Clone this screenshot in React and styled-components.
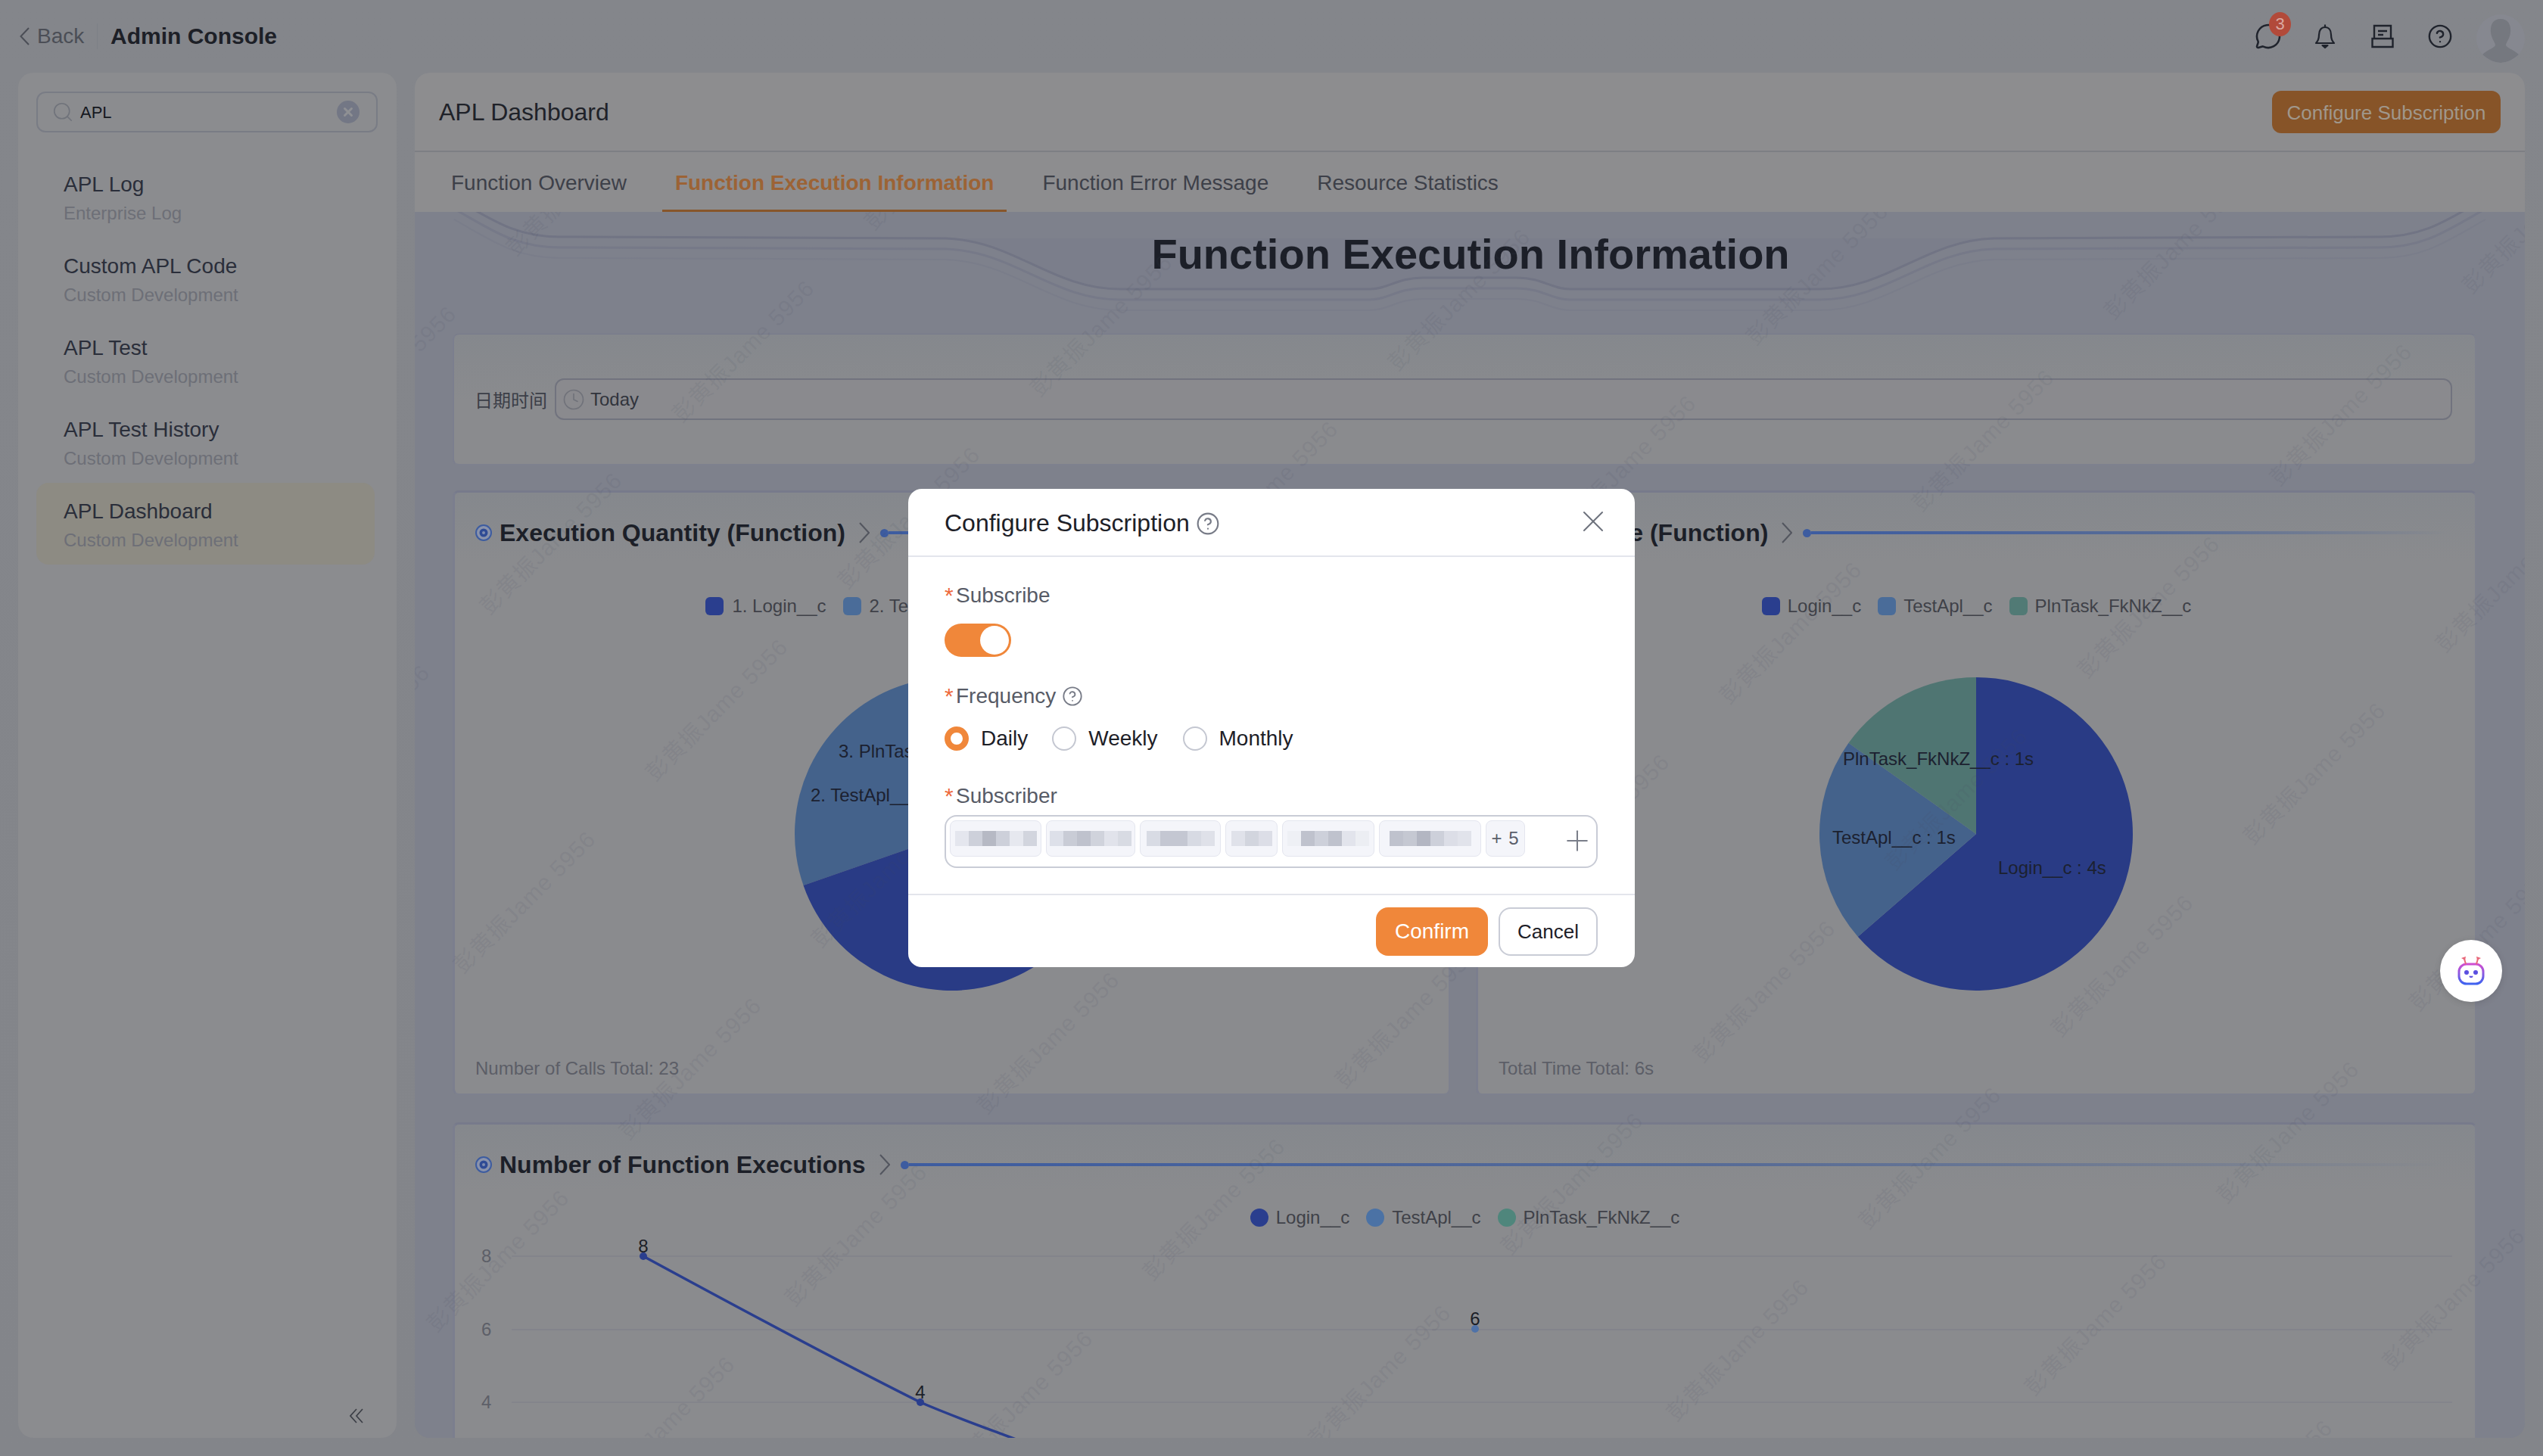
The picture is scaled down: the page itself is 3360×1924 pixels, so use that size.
import React from 'react';
import styled, { createGlobalStyle } from 'styled-components';
import { X, Plus, MessageCircle, CircleHelp, Search, Clock } from 'lucide-react';

const Global = createGlobalStyle`
  html, body { margin: 0; padding: 0; width: 3360px; height: 1924px; overflow: hidden; background: #84868b; }
  * { box-sizing: border-box; }
  body, button { font-family: "Liberation Sans", "Noto Sans CJK SC", Arial, sans-serif; }
`;

const Page = styled.div`
  width: 3360px; height: 1924px; display: flex; flex-direction: column;
  background: linear-gradient(180deg, #84868b 0%, #83858a 100%);
  position: relative; overflow: hidden;
`;
const TopBar = styled.header`
  height: 96px; flex: none; display: flex; align-items: center; padding: 0 24px 0 26px;
`;
const BackLink = styled.div`
  display: flex; align-items: center; gap: 10px; font-size: 28px; color: #4b4e56;
  border-right: 1px solid #7d8087; height: 34px; width: 103px;
`;
const AppName = styled.div`
  margin-left: 17px; font-size: 30px; font-weight: 700; color: #1d2027;
`;
const TopIcons = styled.div`
  margin-left: auto; display: flex; align-items: center; height: 96px;
`;
const IconSlot = styled.div`
  width: 76px; display: flex; justify-content: center; align-items: center; position: relative; color: #1f232c; height: 40px;
`;
const Badge = styled.span`
  position: absolute; left: 40px; top: -12px; width: 29px; height: 32px; border-radius: 50%;
  background: #b24a3a; color: #d9a9a2; font-size: 22px; display: flex; align-items: center; justify-content: center;
`;
const AvatarBox = styled.div`
  width: 64px; height: 64px; margin-left: 10px; margin-top: 6px;
  border-radius: 50%; background: #868890; overflow: hidden;
`;
const Body = styled.div`
  flex: 1; min-height: 0; display: flex; gap: 24px; padding: 0 24px 24px 24px;
`;
const Sidebar = styled.aside`
  width: 500px; flex: none; border-radius: 20px; background: #8b8c8f; padding: 25px 24px 0;
  display: flex; flex-direction: column; position: relative;
`;
const SearchBox = styled.div`
  height: 54px; width: 451px; border: 2px solid #797c85; border-radius: 12px;
  display: flex; align-items: center; padding: 0 22px 0 18px; color: #70737b;
`;
const SearchText = styled.span`
  margin: 2px 0 0 8px; font-size: 22px; color: #15181f; flex: 1;
`;
const ClearDot = styled.span`
  width: 30px; height: 30px; border-radius: 50%; background: #737785; color: #8f9094;
  display: flex; align-items: center; justify-content: center;
`;
const MenuList = styled.div`
  margin-top: 31px; display: flex; flex-direction: column;
`;
const MenuItem = styled.div`
  height: 108px; width: 447px; padding: 20px 36px 0; border-radius: 16px;
  background: ${p => (p.$active ? '#8d8b83' : 'transparent')};
`;
const MenuTitle = styled.div`
  font-size: 28px; line-height: 36px; color: #2a2e3a;
`;
const MenuSub = styled.div`
  font-size: 24px; line-height: 36px; margin-top: 2px; color: #6d6f77;
`;
const Collapse = styled.div`
  position: absolute; right: 44px; bottom: 19px; color: #3c3f47; display: flex;
`;
const Main = styled.main`
  flex: 1; min-width: 0; border-radius: 20px; overflow: hidden; display: flex; flex-direction: column; background: #7e818c;
`;
const MainHead = styled.div`
  height: 105px; flex: none; display: flex; align-items: center; justify-content: space-between;
  padding: 0 32px; background: #8d8d8f; border-bottom: 2px solid #7d7f84;
`;
const MainTitle = styled.h1`
  margin: 2px 0 0; font-size: 32px; font-weight: 400; color: #1f2229;
`;
const SubscribeButton = styled.button`
  width: 302px; height: 56px; border: 0; border-radius: 12px; background: #875428; color: #a0978b; font-size: 26px; padding: 3px 0 0;
`;
const Tabs = styled.nav`
  height: 79px; flex: none; display: flex; gap: 30px; padding-left: 31px; background: #8d8d8f;
`;
const Tab = styled.div`
  padding: 6px 17px 0; display: flex; align-items: center; font-size: 28px; position: relative;
  color: ${p => (p.$active ? '#9c6335' : '#3d4049')};
  font-weight: ${p => (p.$active ? 700 : 400)};
  border-bottom: 4px solid ${p => (p.$active ? '#87562b' : 'transparent')};
  margin-bottom: -1px;
`;
const Content = styled.section`
  flex: 1; min-height: 0; overflow: hidden; position: relative; padding: 0 64px 0 50px;
  background: #7e818c;
`;
const Deco = styled.svg`
  position: absolute; left: 0; top: 0;
`;
const Heading = styled.h2`
  position: relative; height: 161px; margin: 0; padding: 21px 0 0 16px; text-align: center; font-size: 56px; line-height: 70px;
  font-weight: 700; color: #1c1f28;
`;
const Card = styled.div`
  position: relative; flex: none; border-radius: 8px; border-top: 3px solid #777a8b; border-left: 3px solid #7b7e8e;
  border-right: 2px solid #7e818e; border-bottom: 2px solid #7e818e;
  background: linear-gradient(180deg, #85888d 0, #8a8b8e 90px), #8a8b8e;
`;
const DateCard = styled(Card)`
  height: 174px; display: flex; align-items: center; padding: 0 30px 0 27px; border-top-width: 1px; border-left-width: 2px;
`;
const DateLabel = styled.span`
  font-size: 24px; color: #3b3e47; width: 106px; flex: none;
`;
const DateInput = styled.div`
  flex: 1; height: 55px; border: 2px solid #71737e; border-radius: 12px; display: flex; align-items: center; gap: 7px;
  padding-left: 8px; font-size: 24px; color: #31343c; background: #8a8a8e;
  svg { color: #70727a; }
`;
const PieRow = styled.div`
  display: grid; grid-template-columns: 1318px 1322px; column-gap: 34px; margin-top: 33px;
`;
const PieCard = styled(Card)`
  height: 799px; display: flex; flex-direction: column;
`;
const SectionHead = styled.div`
  flex: none; height: 38px; margin-top: 34px; padding: 0 36px 0 ${p => p.$left || 27}px; display: flex; align-items: center;
`;
const SectionTitle = styled.h3`
  margin: 0 0 0 10px; font-size: 32px; font-weight: 700; color: #1c1f28; white-space: nowrap;
`;
const Arrow = styled.svg`
  flex: none; margin-left: 18px; color: #53565f;
`;
const Dot = styled.span`
  flex: none; width: 11px; height: 11px; border-radius: 50%; background: #3d5ca0; margin-left: 14px;
`;
const Rule = styled.span`
  flex: 1; height: 4px; background: linear-gradient(90deg, #3d5ca0 0%, #586c96 55%, rgba(120,128,150,0) 100%);
`;
const Legend = styled.div`
  flex: none; height: 30px; display: flex; justify-content: center; align-items: center; gap: 22px; margin-top: ${p => p.$top}px;
`;
const LegendItem = styled.div`
  display: flex; align-items: center; gap: ${p => p.$gap}px; font-size: 24px; color: #3f4148;
`;
const Swatch = styled.span`
  width: 24px; height: 24px; border-radius: 6px; background: ${p => p.$color};
`;
const Round = styled.span`
  width: 24px; height: 24px; border-radius: 50%; background: ${p => p.$color};
`;
const PieSvg = styled.svg`
  display: block; flex: none; margin-top: 34px;
`;
const Total = styled.div`
  margin-top: auto; padding: 0 0 18px 27px; font-size: 24px; line-height: 30px; color: #5c5e67;
`;
const LineCard = styled(Card)`
  margin-top: 36px; height: 900px;
`;
const LineSvg = styled.svg`
  display: block;
`;
const WatermarkLayer = styled.div`
  position: absolute; inset: 0; overflow: hidden; pointer-events: none;
`;
const Mark = styled.span`
  position: absolute; font-size: 30px; letter-spacing: 1px; color: rgba(70,74,95,.11); white-space: nowrap;
  transform: translate(-50%, -50%) rotate(-45deg);
`;
const BotButton = styled.div`
  position: absolute; left: 3224px; top: 1242px; width: 82px; height: 82px; border-radius: 50%; background: #fff;
  display: flex; align-items: center; justify-content: center; box-shadow: 0 2px 10px rgba(0,0,0,.12);
`;
const Overlay = styled.div`
  position: absolute; inset: 0; display: flex; align-items: center; justify-content: center;
`;
const Modal = styled.div`
  width: 960px; height: 632px; background: #fff; border-radius: 18px; display: flex; flex-direction: column;
`;
const ModalHead = styled.div`
  flex: none; height: 90px; padding: 3px 31px 0 48px; display: flex; align-items: center; border-bottom: 2px solid #e3e5ec;
  font-size: 32px; color: #1d2027;
`;
const Help = styled.span`
  display: inline-flex; margin-left: 8px; color: #777b87;
`;
const CloseBtn = styled.span`
  margin-left: auto; margin-top: -6px; display: flex; color: #6d717c;
`;
const ModalBody = styled.div`
  flex: 1; padding: 35px 48px 0; display: flex; flex-direction: column;
`;
const Label = styled.div`
  display: flex; align-items: center; height: 32px; font-size: 28px; color: #575b66;
  margin-top: ${p => p.$top || 0}px;
`;
const Star = styled.span`
  color: #ee6a3d; width: 15px; font-size: 30px; flex: none;
`;
const Toggle = styled.div`
  margin-top: 21px; width: 88px; height: 44px; border-radius: 22px; background: #f0873a; padding: 3px; display: flex; justify-content: flex-end;
`;
const Knob = styled.span`
  width: 38px; height: 38px; border-radius: 50%; background: #fff;
`;
const Radios = styled.div`
  margin-top: 24px; height: 32px; display: flex; align-items: center;
`;
const RadioCircle = styled.span`
  flex: none; width: 32px; height: 32px; border-radius: 50%; background: #fff;
  border: ${p => (p.$on ? '8px solid #f0873a' : '2px solid #c4c7d1')};
`;
const RadioText = styled.span`
  margin-left: 16px; margin-right: ${p => p.$after}px; font-size: 28px; color: #1d2027;
`;
const TagBox = styled.div`
  margin-top: 9px; width: 863px; height: 70px; border: 2px solid #c9ccd6; border-radius: 16px; display: flex;
  align-items: flex-start; padding: 5px 0 0 5px; gap: 6px; position: relative;
`;
const Tag = styled.div`
  height: 48px; width: ${p => p.$w}px; flex: none; background: #f4f5fa; border: 1px solid #e4e6ef; border-radius: 8px;
  display: flex; align-items: center; justify-content: center; overflow: visible;
  font-size: 24px; color: #5a5e6a; letter-spacing: 1px;
`;
const Cell = styled.span`
  width: 18px; height: 20px; flex: none; background: ${p => p.$c};
`;
const AddIcon = styled.span`
  position: absolute; right: 3px; top: 10px; display: flex; color: #7a7e89;
`;
const ModalFoot = styled.div`
  flex: none; height: 97px; border-top: 2px solid #e3e5ec; display: flex; justify-content: flex-end; align-items: flex-start;
  padding: 16px 49px 0 0; gap: 14px;
`;
const PrimaryBtn = styled.button`
  width: 148px; height: 64px; border: 0; border-radius: 16px; background: #f0873a; color: #fff; font-size: 28px; padding: 0;
`;
const GhostBtn = styled.button`
  width: 131px; height: 64px; border: 2px solid #c9ccd6; border-radius: 16px; background: #fff; color: #1d2027; font-size: 26px; padding: 0;
`;

const C = { dark: '#293b85', mid: '#44628b', green: '#4f7572' };
const menu = [
  ['APL Log', 'Enterprise Log'],
  ['Custom APL Code', 'Custom Development'],
  ['APL Test', 'Custom Development'],
  ['APL Test History', 'Custom Development'],
  ['APL Dashboard', 'Custom Development', true],
];
const tabs = ['Function Overview', 'Function Execution Information', 'Function Error Message', 'Resource Statistics'];
const tagShades = [
  [121, ['#e4e6ee', '#cdd0da', '#b6b9c4', '#cdd0da', '#e6e8ef', '#d2d5de']],
  [118, ['#dde0e9', '#c9ccd6', '#bfc2cd', '#d0d3dc', '#e1e3eb', '#d8dbe3']],
  [107, ['#d8dbe4', '#c4c7d2', '#c4c7d2', '#d7dae3', '#dfe1e9']],
  [69, ['#e0e2ea', '#d2d5de', '#dcdee7']],
  [122, ['#eef0f5', '#bfc2cd', '#cdd0da', '#bfc2cd', '#e2e4ec', '#eceef3']],
  [135, ['#bfc2cd', '#c5c8d2', '#b3b6c2', '#cdd0da', '#dcdee7', '#e1e3eb']],
];

function polar(r, deg) {
  const a = (deg * Math.PI) / 180;
  return [r * Math.sin(a), -r * Math.cos(a)];
}
function slice(r, from, to) {
  const [x1, y1] = polar(r, from);
  const [x2, y2] = polar(r, to);
  return `M0 0 L${x1} ${y1} A${r} ${r} 0 ${to - from > 180 ? 1 : 0} 1 ${x2} ${y2} Z`;
}

const Chevron = () => (
  <Arrow width="14" height="28" viewBox="0 0 14 28" fill="none" stroke="currentColor" strokeWidth="2"><path d="M1 1 L13 14 L1 27" /></Arrow>
);
const BackChevron = () => (
  <svg width="13" height="24" viewBox="0 0 13 24" fill="none" stroke="currentColor" strokeWidth="2"><path d="M12 1 L1.5 12 L12 23" /></svg>
);
const DoubleChevron = () => (
  <svg width="18" height="20" viewBox="0 0 18 20" fill="none" stroke="currentColor" strokeWidth="1.7"><path d="M9 1 L1 10 L9 19 M17 1 L9 10 L17 19" /></svg>
);
const Target = () => (
  <svg width="22" height="24" viewBox="0 0 22 24" style={{ flex: 'none' }}>
    <circle cx="11" cy="12" r="10" fill="#8a93ac" stroke="#3d5ca0" strokeWidth="2" />
    <circle cx="11" cy="12" r="5.5" fill="#2f4b95" />
    <circle cx="11" cy="12" r="2" fill="#7f8db0" />
  </svg>
);
const Bell = () => (
  <svg width="30" height="34" viewBox="0 0 30 34" fill="none" stroke="currentColor" strokeWidth="2.2" strokeLinejoin="round">
    <path d="M3 26 C6 23 7 20 7 15 C7 9 10 5 15 5 C20 5 23 9 23 15 C23 20 24 23 27 26 Z" />
    <path d="M15 1.5 V5" />
    <path d="M11.5 29 H18.5 L15 32 Z" fill="currentColor" />
  </svg>
);
const DocTray = () => (
  <svg width="30" height="32" viewBox="0 0 30 32" fill="none" stroke="currentColor" strokeWidth="2.4">
    <path d="M4 20 V2 H26 V20" />
    <path d="M1.5 19 H28.5 V30 H1.5 Z" />
    <path d="M9 9 H21 M9 14 H16" />
  </svg>
);
const Avatar = () => (
  <svg width="64" height="64" viewBox="0 0 64 64">
    <path d="M32 6 C42 6 46 14 45 24 C44 32 40 36 39 40 C39 44 48 46 56 53 C48 60 40 64 32 64 C24 64 16 60 8 53 C16 46 25 44 25 40 C24 36 20 32 19 24 C18 14 22 6 32 6 Z" fill="#75787f" />
  </svg>
);
const Bot = () => (
  <svg width="44" height="44" viewBox="0 0 44 44" fill="none">
    <defs>
      <linearGradient id="botg" x1="0" y1="0" x2="0" y2="1"><stop offset="0" stopColor="#d14fd0" /><stop offset="1" stopColor="#3f63f0" /></linearGradient>
    </defs>
    <rect x="6" y="13" width="32" height="26" rx="10" stroke="url(#botg)" strokeWidth="3" />
    <path d="M15 13 L13 6 M29 13 L31 6" stroke="#e8687a" strokeWidth="2" />
    <path d="M9 5 L15 3 L14 8 Z M35 5 L29 3 L30 8 Z" fill="#e8687a" />
    <circle cx="16" cy="24" r="3" fill="#5b4fe0" /><circle cx="28" cy="24" r="3" fill="#5b4fe0" />
    <path d="M20 29 Q22 31 24 29" stroke="#5b4fe0" strokeWidth="2" />
  </svg>
);
const strand = dy => `M600 ${262 + dy} C650 ${290 + dy} 680 ${313 + dy} 740 ${313 + dy} L1250 ${315 + dy} C1340 ${318 + dy} 1390 ${382 + dy} 1480 ${382 + dy} L1810 ${382 + dy} C1835 ${382 + dy} 1845 ${367 + dy} 1880 ${367 + dy} L2004 ${367 + dy} C2039 ${367 + dy} 2049 ${382 + dy} 2074 ${382 + dy} L2404 ${382 + dy} C2494 ${382 + dy} 2544 ${318 + dy} 2634 ${315 + dy} L3144 ${313 + dy} C3204 ${313 + dy} 3234 ${290 + dy} 3284 ${262 + dy}`;

const marks = [];
for (let n = -8; n < 10; n++) {
  for (let m = -6; m < 12; m++) {
    const x = 2364 + 473 * n + 219 * m;
    const y = 834 - 34 * n + 220 * m;
    if (x > 400 && x < 3500 && y > 200 && y < 2100) marks.push([x - 548, y - 280]);
  }
}

export default function App() {
  return (
    <Page>
      <Global />
      <TopBar>
        <BackLink><BackChevron />Back</BackLink>
        <AppName>Admin Console</AppName>
        <TopIcons>
          <IconSlot>
            <MessageCircle size={36} strokeWidth={1.7} style={{ marginLeft: 2 }} />
            <Badge>3</Badge>
          </IconSlot>
          <IconSlot><Bell /></IconSlot>
          <IconSlot><DocTray /></IconSlot>
          <IconSlot><CircleHelp size={34} strokeWidth={1.7} /></IconSlot>
          <AvatarBox><Avatar /></AvatarBox>
        </TopIcons>
      </TopBar>
      <Body>
        <Sidebar>
          <SearchBox>
            <Search size={30} strokeWidth={1.3} />
            <SearchText>APL</SearchText>
            <ClearDot><X size={18} strokeWidth={4} /></ClearDot>
          </SearchBox>
          <MenuList>
            {menu.map(([t, s, a]) => (
              <MenuItem key={t} $active={a}>
                <MenuTitle>{t}</MenuTitle>
                <MenuSub>{s}</MenuSub>
              </MenuItem>
            ))}
          </MenuList>
          <Collapse><DoubleChevron /></Collapse>
        </Sidebar>
        <Main>
          <MainHead>
            <MainTitle>APL Dashboard</MainTitle>
            <SubscribeButton>Configure Subscription</SubscribeButton>
          </MainHead>
          <Tabs>
            {tabs.map((t, i) => <Tab key={t} $active={i === 1}>{t}</Tab>)}
          </Tabs>
          <Content>
            <Deco width="2788" height="200" viewBox="548 280 2788 200" fill="none">
              <path d="M1250 315 C1340 318 1390 382 1480 382 L1810 382 C1835 382 1845 367 1880 367 L2004 367 C2039 367 2049 382 2074 382 L2404 382 C2494 382 2544 318 2634 315 Z" fill="#777a8a" opacity=".4" />
              <path d={strand(0)} stroke="#717484" strokeWidth="3" />
              <path d={strand(14)} stroke="#767988" strokeWidth="3" />
              <path d={strand(28)} stroke="#7a7d8a" strokeWidth="2" />
            </Deco>
            <Heading>Function Execution Information</Heading>
            <DateCard>
              <DateLabel>日期时间</DateLabel>
              <DateInput><Clock size={30} strokeWidth={1.3} />Today</DateInput>
            </DateCard>
            <PieRow>
              <PieCard>
                <SectionHead>
                  <Target />
                  <SectionTitle>Execution Quantity (Function)</SectionTitle>
                  <Chevron /><Dot /><Rule />
                </SectionHead>
                <Legend $top={63}>
                  <LegendItem $gap={11}><Swatch $color="#2a3e8e" />1. Login__c</LegendItem>
                  <LegendItem $gap={11}><Swatch $color="#4a6c99" />2. TestApl__c</LegendItem>
                  <LegendItem $gap={11}><Swatch $color="#517a75" />3. PlnTask_FkNkZ__c</LegendItem>
                </Legend>
                <PieSvg width="1313" height="504" viewBox="-656 -252 1313 504" fontSize="24" fill="#1c2130">
                  <path d={slice(207, -109.2, 70)} fill={C.mid} />
                  <path d={slice(207, 70, 250.8)} fill={C.dark} />
                  <text x="-149" y="-101">3. PlnTask_FkNkZ__c</text>
                  <text x="-186" y="-43">2. TestApl__c</text>
                </PieSvg>
                <Total>Number of Calls Total: 23</Total>
              </PieCard>
              <PieCard>
                <SectionHead $left={29}>
                  <Target />
                  <SectionTitle>Total Time (Function)</SectionTitle>
                  <Chevron /><Dot /><Rule />
                </SectionHead>
                <Legend $top={63}>
                  <LegendItem $gap={10}><Swatch $color="#2a3e8e" />Login__c</LegendItem>
                  <LegendItem $gap={10}><Swatch $color="#4a6c99" />TestApl__c</LegendItem>
                  <LegendItem $gap={10}><Swatch $color="#517a75" />PlnTask_FkNkZ__c</LegendItem>
                </Legend>
                <PieSvg width="1317" height="504" viewBox="-658 -252 1317 504" fontSize="24" fill="#1c2130">
                  <path d={slice(207, 0, 229)} fill={C.dark} />
                  <path d={slice(207, 229, 305.5)} fill={C.mid} />
                  <path d={slice(207, 305.5, 360)} fill={C.green} />
                  <text x="-176" y="-91">PlnTask_FkNkZ__c : 1s</text>
                  <text x="-190" y="13">TestApl__c : 1s</text>
                  <text x="29" y="53">Login__c : 4s</text>
                </PieSvg>
                <Total>Total Time Total: 6s</Total>
              </PieCard>
            </PieRow>
            <LineCard>
              <SectionHead>
                <Target />
                <SectionTitle>Number of Function Executions</SectionTitle>
                <Chevron /><Dot /><Rule />
              </SectionHead>
              <Legend $top={36}>
                <LegendItem $gap={10}><Round $color="#2a3e8e" />Login__c</LegendItem>
                <LegendItem $gap={10}><Round $color="#4b72a5" />TestApl__c</LegendItem>
                <LegendItem $gap={10}><Round $color="#4f867c" />PlnTask_FkNkZ__c</LegendItem>
              </Legend>
              <LineSvg width="2667" height="400" viewBox="601 1624 2667 400" fontSize="24" fill="none">
                {[1660, 1757, 1853].map(y => <path key={y} d={`M676 ${y} H3240`} stroke="#80828a" strokeWidth="1.5" />)}
                <g fill="#5d5f68" stroke="none">
                  <text x="636" y="1668">8</text>
                  <text x="636" y="1765">6</text>
                  <text x="636" y="1861">4</text>
                </g>
                <path d="M850 1660 C920 1698 1090 1790 1216 1853 C1260 1872 1300 1886 1345 1903" stroke="#2a3e8e" strokeWidth="3.5" />
                <circle cx="850" cy="1660" r="5" fill="#2a3e8e" />
                <circle cx="1216" cy="1853" r="5" fill="#2a3e8e" />
                <circle cx="1949" cy="1756" r="5" fill="#4f72a8" />
                <g fill="#1c1f28" stroke="none" textAnchor="middle">
                  <text x="850" y="1655">8</text>
                  <text x="1216" y="1848">4</text>
                  <text x="1949" y="1751">6</text>
                </g>
              </LineSvg>
            </LineCard>
            <WatermarkLayer>
              {marks.map(([x, y]) => <Mark key={`${x}-${y}`} style={{ left: x, top: y }}>彭黄振Jame 5956</Mark>)}
            </WatermarkLayer>
          </Content>
        </Main>
      </Body>
      <BotButton><Bot /></BotButton>
      <Overlay>
        <Modal>
          <ModalHead>
            Configure Subscription
            <Help><CircleHelp size={32} strokeWidth={1.6} /></Help>
            <CloseBtn><X size={48} strokeWidth={1} /></CloseBtn>
          </ModalHead>
          <ModalBody>
            <Label><Star>*</Star>Subscribe</Label>
            <Toggle><Knob /></Toggle>
            <Label $top={36}><Star>*</Star>Frequency<Help><CircleHelp size={28} strokeWidth={1.6} /></Help></Label>
            <Radios>
              <RadioCircle $on />
              <RadioText $after={32}>Daily</RadioText>
              <RadioCircle />
              <RadioText $after={33}>Weekly</RadioText>
              <RadioCircle />
              <RadioText $after={0}>Monthly</RadioText>
            </Radios>
            <Label $top={44}><Star>*</Star>Subscriber</Label>
            <TagBox>
              {tagShades.map(([w, cells], i) => (
                <Tag key={i} $w={w}>{cells.map((c, j) => <Cell key={j} $c={c} />)}</Tag>
              ))}
              <Tag $w={52}>+ 5</Tag>
              <AddIcon><Plus size={44} strokeWidth={1.1} /></AddIcon>
            </TagBox>
          </ModalBody>
          <ModalFoot>
            <PrimaryBtn>Confirm</PrimaryBtn>
            <GhostBtn>Cancel</GhostBtn>
          </ModalFoot>
        </Modal>
      </Overlay>
    </Page>
  );
}
